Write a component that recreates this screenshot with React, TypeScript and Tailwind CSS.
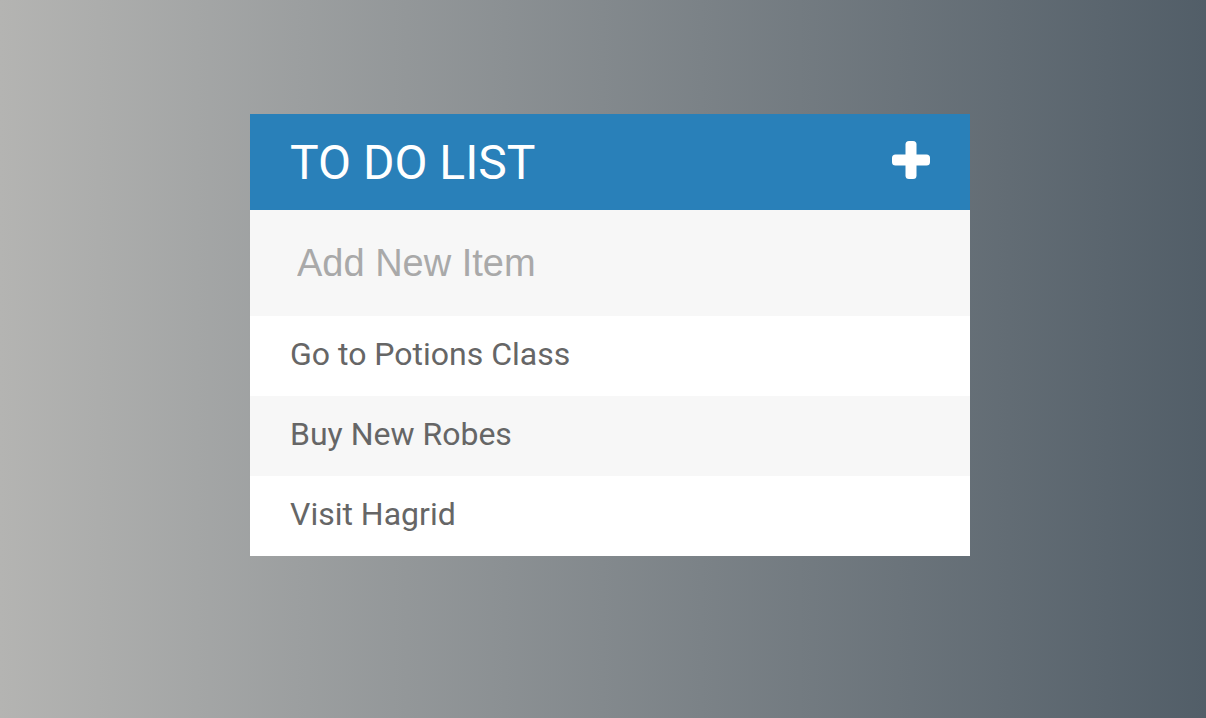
const items = ["Go to Potions Class", "Buy New Robes", "Visit Hagrid"];

function PlusIcon() {
  return (
    <svg width="38" height="38" viewBox="0 0 38 38" aria-hidden="true">
      <rect x="13.5" y="0" width="11" height="38" rx="3.5" fill="#fff" />
      <rect x="0" y="13.5" width="38" height="11" rx="3.5" fill="#fff" />
    </svg>
  );
}

export default function App() {
  return (
    <div className="flex h-[718px] w-full items-start justify-center bg-[linear-gradient(to_right,#b4b4b2,#525e68)] pt-[114px] font-['Roboto',sans-serif]">
      <div className="ml-[14px] w-[720px] bg-white">
        <div className="flex h-[96px] items-center justify-between bg-[#2980b9] pl-[40px] pr-[40px]">
          <h1 className="mt-[1px] text-[48px] font-normal leading-none text-white">
            TO DO LIST
          </h1>
          <button className="mt-[-4px] flex items-center">
            <PlusIcon />
          </button>
        </div>
        <input
          className="block h-[106px] w-full bg-[#f7f7f7] pl-[47px] font-['Liberation_Sans',Arial,sans-serif] text-[38px] text-[#666] outline-none placeholder:text-[#a9a9a9]"
          placeholder="Add New Item"
        />
        <ul>
          {items.map((item, i) => (
            <li
              key={item}
              className={
                i % 2 === 1
                  ? "flex h-[80px] items-center bg-[#f7f7f7] pb-[4px] pl-[40px] text-[32px] text-[#666]"
                  : "flex h-[80px] items-center bg-white pb-[4px] pl-[40px] text-[32px] text-[#666]"
              }
            >
              {item}
            </li>
          ))}
        </ul>
      </div>
    </div>
  );
}
